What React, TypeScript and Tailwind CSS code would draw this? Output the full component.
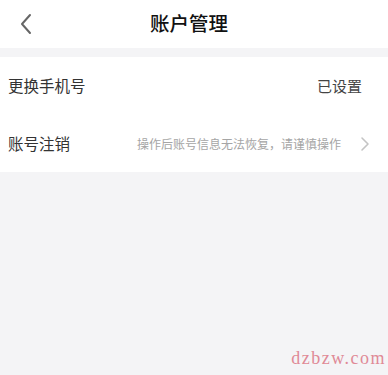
import React from "react";

export default function App() {
  const font = { fontFamily: '"Noto Sans CJK SC", "Noto Sans", sans-serif' };
  return (
    <div className="w-[388px] h-[375px] bg-[#f4f4f6] flex flex-col relative overflow-hidden" style={font}>
      <div className="h-[48px] bg-white flex items-center relative">
        <svg className="absolute left-[19px] top-[13px]" width="14" height="22" viewBox="0 0 14 22" fill="none">
          <path d="M11 2 L3 11 L11 20" stroke="#666" strokeWidth="2" strokeLinecap="round" strokeLinejoin="round" />
        </svg>
        <div className="flex-1 text-center text-[19.5px] font-medium text-[#111] leading-none pb-[2px] pr-[10px]">账户管理</div>
      </div>
      <div className="h-[9px]" />
      <div className="bg-white flex flex-col">
        <div className="h-[58px] flex items-center justify-between pl-[8px] pr-[26px]">
          <span className="text-[15.5px] text-[#333]">更换手机号</span>
          <span className="text-[15px] text-[#444]">已设置</span>
        </div>
        <div className="h-[57px] flex items-center pl-[8px] pr-[18px]">
          <span className="text-[15.5px] text-[#333]">账号注销</span>
          <span className="ml-auto text-[12px] text-[#a5a5a5]">操作后账号信息无法恢复，请谨慎操作</span>
          <svg className="ml-[19px]" width="10" height="16" viewBox="0 0 10 16" fill="none">
            <path d="M2 2 L8 8 L2 14" stroke="#c4c4c4" strokeWidth="1.6" strokeLinecap="round" strokeLinejoin="round" />
          </svg>
        </div>
      </div>
      <div className="absolute right-[2px] bottom-[3px] text-[18px] tracking-[1.5px] text-[#e08a96]" style={{ fontFamily: '"Liberation Serif", serif' }}>
        dzbzw.com
      </div>
    </div>
  );
}
